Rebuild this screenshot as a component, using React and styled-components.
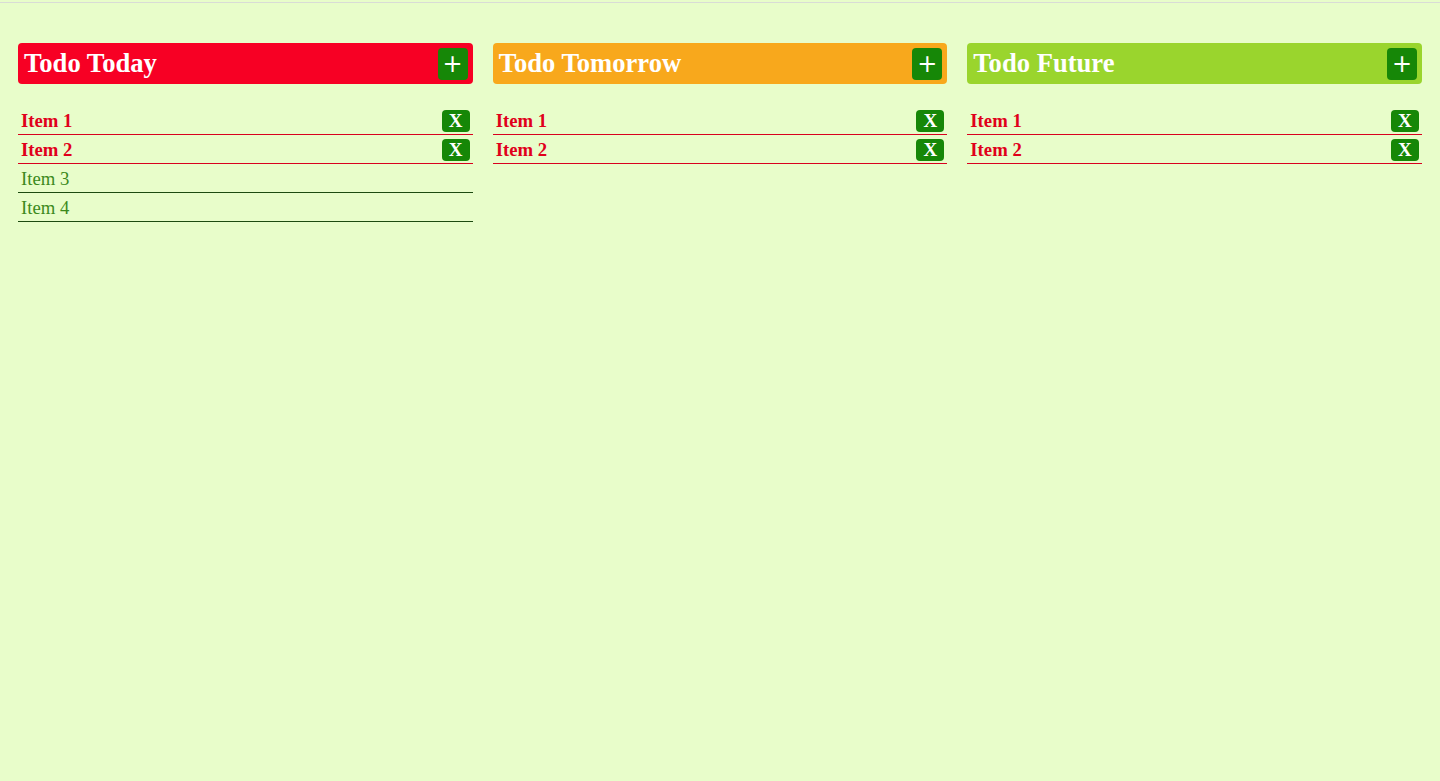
import React from "react";
import styled, { createGlobalStyle } from "styled-components";

const Global = createGlobalStyle`
  html, body { margin: 0; padding: 0; background: #e8fdca; }
  body { font-family: "Liberation Serif", "Times New Roman", serif; }
`;

const TopRule = styled.div`
  height: 2px;
  border-bottom: 1px solid #d9dcd6;
`;

const Board = styled.main`
  display: grid;
  grid-template-columns: repeat(3, 1fr);
  gap: 20px;
  padding: 40px 18px 0;
`;

const Column = styled.section`
  display: flex;
  flex-direction: column;
`;

const Header = styled.header`
  display: flex;
  align-items: center;
  justify-content: space-between;
  height: 41px;
  box-sizing: border-box;
  padding: 0 5px 0 6px;
  border-radius: 4px;
  background: ${(p) => p.$color};
`;

const Title = styled.h2`
  margin: 0;
  font-size: 26.6px;
  font-weight: bold;
  color: #ffffff;
`;

const AddButton = styled.button`
  width: 30px;
  height: 32px;
  border: none;
  border-radius: 4px;
  background: #168707;
  color: #ffffff;
  font-family: "DejaVu Sans", sans-serif;
  font-size: 24px;
  line-height: 32px;
  padding: 0;
  display: flex;
  align-items: center;
  justify-content: center;
`;

const List = styled.ul`
  list-style: none;
  margin: 22px 0 0;
  padding: 0;
`;

const Row = styled.li`
  display: flex;
  align-items: center;
  justify-content: space-between;
  height: 28px;
  padding: 0 3px 0 3px;
  border-bottom: 1px solid ${(p) => (p.$done ? "#1d4a10" : "#d8001e")};
`;

const ItemText = styled.span`
  font-size: 18.72px;
  line-height: 22px;
  padding-top: 2px;
  font-weight: ${(p) => (p.$done ? "normal" : "bold")};
  color: ${(p) => (p.$done ? "#3b8a1c" : "#e0001b")};
`;

const RemoveButton = styled.button`
  width: 28px;
  height: 22px;
  margin-top: 2px;
  border: none;
  border-radius: 4px;
  background: #168707;
  color: #ffffff;
  font-family: "Liberation Serif", "Times New Roman", serif;
  font-weight: bold;
  font-size: 19px;
  line-height: 22px;
  padding: 0;
  display: flex;
  align-items: center;
  justify-content: center;
`;

const columns = [
  {
    title: "Todo Today",
    color: "#f70024",
    items: [
      { text: "Item 1", done: false },
      { text: "Item 2", done: false },
      { text: "Item 3", done: true },
      { text: "Item 4", done: true },
    ],
  },
  {
    title: "Todo Tomorrow",
    color: "#f8a81c",
    items: [
      { text: "Item 1", done: false },
      { text: "Item 2", done: false },
    ],
  },
  {
    title: "Todo Future",
    color: "#9ad52d",
    items: [
      { text: "Item 1", done: false },
      { text: "Item 2", done: false },
    ],
  },
];

export default function App() {
  return (
    <>
      <Global />
      <TopRule />
      <Board>
        {columns.map((col) => (
          <Column key={col.title}>
            <Header $color={col.color}>
              <Title>{col.title}</Title>
              <AddButton>+</AddButton>
            </Header>
            <List>
              {col.items.map((it) => (
                <Row key={it.text} $done={it.done}>
                  <ItemText $done={it.done}>{it.text}</ItemText>
                  {!it.done && <RemoveButton>X</RemoveButton>}
                </Row>
              ))}
            </List>
          </Column>
        ))}
      </Board>
    </>
  );
}
